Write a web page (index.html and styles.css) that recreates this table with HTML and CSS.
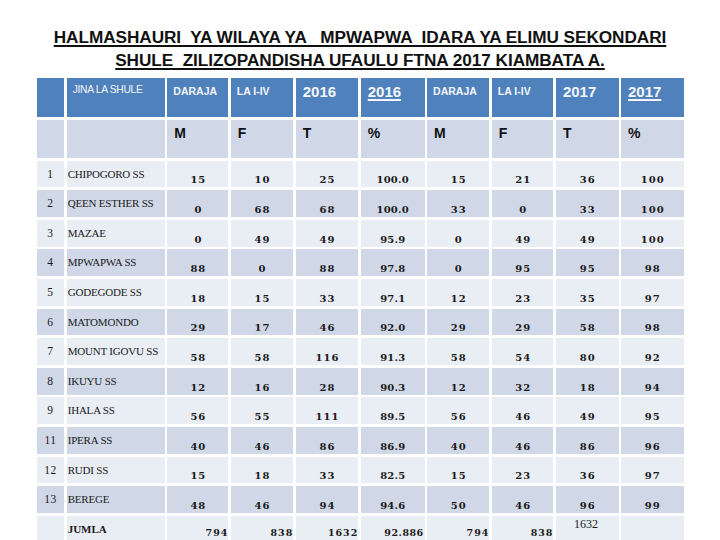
FILE: index.html
```html
<!DOCTYPE html>
<html>
<head>
<meta charset="utf-8">
<link rel="stylesheet" href="styles.css">
</head>
<body>
<div class="page">
  <h1 class="title"><span class="line">HALMASHAURI  YA WILAYA YA   MPWAPWA  IDARA YA ELIMU SEKONDARI</span><span class="line">SHULE  ZILIZOPANDISHA UFAULU FTNA 2017 KIAMBATA A.</span></h1>
  <div class="grid">
    <div class="row head">
      <div></div>
      <div class="small">JINA LA SHULE</div>
      <div class="mid">DARAJA</div>
      <div class="mid">LA I-IV</div>
      <div class="year">2016</div>
      <div class="year u">2016</div>
      <div class="mid">DARAJA</div>
      <div class="mid">LA I-IV</div>
      <div class="year">2017</div>
      <div class="year u">2017</div>
    </div>
    <div class="row sub">
      <div></div><div></div>
      <div>M</div><div>F</div><div>T</div><div>%</div>
      <div>M</div><div>F</div><div>T</div><div>%</div>
    </div>
    <div class="row body light">
      <div class="no">1</div><div class="name">CHIPOGORO SS</div>
      <div class="n">15</div><div class="n">10</div><div class="n">25</div><div class="n d">100.0</div><div class="n">15</div><div class="n">21</div><div class="n">36</div><div class="n">100</div>
    </div>
    <div class="row body dark">
      <div class="no">2</div><div class="name">QEEN ESTHER SS</div>
      <div class="n">0</div><div class="n">68</div><div class="n">68</div><div class="n d">100.0</div><div class="n">33</div><div class="n">0</div><div class="n">33</div><div class="n">100</div>
    </div>
    <div class="row body light">
      <div class="no">3</div><div class="name">MAZAE</div>
      <div class="n">0</div><div class="n">49</div><div class="n">49</div><div class="n d">95.9</div><div class="n">0</div><div class="n">49</div><div class="n">49</div><div class="n">100</div>
    </div>
    <div class="row body dark">
      <div class="no">4</div><div class="name">MPWAPWA SS</div>
      <div class="n">88</div><div class="n">0</div><div class="n">88</div><div class="n d">97.8</div><div class="n">0</div><div class="n">95</div><div class="n">95</div><div class="n">98</div>
    </div>
    <div class="row body light">
      <div class="no">5</div><div class="name">GODEGODE SS</div>
      <div class="n">18</div><div class="n">15</div><div class="n">33</div><div class="n d">97.1</div><div class="n">12</div><div class="n">23</div><div class="n">35</div><div class="n">97</div>
    </div>
    <div class="row body dark">
      <div class="no">6</div><div class="name">MATOMONDO</div>
      <div class="n">29</div><div class="n">17</div><div class="n">46</div><div class="n d">92.0</div><div class="n">29</div><div class="n">29</div><div class="n">58</div><div class="n">98</div>
    </div>
    <div class="row body light">
      <div class="no">7</div><div class="name">MOUNT IGOVU SS</div>
      <div class="n">58</div><div class="n">58</div><div class="n">116</div><div class="n d">91.3</div><div class="n">58</div><div class="n">54</div><div class="n">80</div><div class="n">92</div>
    </div>
    <div class="row body dark">
      <div class="no">8</div><div class="name">IKUYU SS</div>
      <div class="n">12</div><div class="n">16</div><div class="n">28</div><div class="n d">90.3</div><div class="n">12</div><div class="n">32</div><div class="n">18</div><div class="n">94</div>
    </div>
    <div class="row body light">
      <div class="no">9</div><div class="name">IHALA SS</div>
      <div class="n">56</div><div class="n">55</div><div class="n">111</div><div class="n d">89.5</div><div class="n">56</div><div class="n">46</div><div class="n">49</div><div class="n">95</div>
    </div>
    <div class="row body dark">
      <div class="no">11</div><div class="name">IPERA SS</div>
      <div class="n">40</div><div class="n">46</div><div class="n">86</div><div class="n d">86.9</div><div class="n">40</div><div class="n">46</div><div class="n">86</div><div class="n">96</div>
    </div>
    <div class="row body light">
      <div class="no">12</div><div class="name">RUDI SS</div>
      <div class="n">15</div><div class="n">18</div><div class="n">33</div><div class="n d">82.5</div><div class="n">15</div><div class="n">23</div><div class="n">36</div><div class="n">97</div>
    </div>
    <div class="row body dark">
      <div class="no">13</div><div class="name">BEREGE</div>
      <div class="n">48</div><div class="n">46</div><div class="n">94</div><div class="n d">94.6</div><div class="n">50</div><div class="n">46</div><div class="n">96</div><div class="n">99</div>
    </div>
    <div class="row body light total">
      <div></div><div class="name bold">JUMLA</div>
      <div class="t">794</div><div class="t">838</div><div class="t">1632</div><div class="t d">92.886</div><div class="t">794</div><div class="t">838</div><div class="t plain">1632</div><div></div>
    </div>
  </div>
</div>
</body>
</html>
```
FILE: styles.css
```css
html, body {
  margin: 0;
  padding: 0;
  background: #ffffff;
}

.page {
  width: 720px;
  height: 540px;
  overflow: hidden;
}

.title {
  margin: 0;
  padding-top: 26px;
  display: flex;
  flex-direction: column;
  align-items: center;
  font-family: "Liberation Sans", Arial, sans-serif;
  font-weight: bold;
  font-size: 17.2px;
  line-height: 23px;
  letter-spacing: -0.05px;
  color: #111;
}

.title .line {
  white-space: pre;
  text-decoration: underline;
  text-decoration-thickness: 1.5px;
  text-underline-offset: 2px;
}

.grid {
  margin: 6px 0 0 36.7px;
  display: grid;
  grid-template-columns: 27.6px 98.3px 61px 62.6px 62.6px 64px 62.3px 61.7px 62.7px 62.7px;
  grid-template-rows: 39px 38px repeat(13, 26.8px);
  column-gap: 2.4px;
  row-gap: 2.8px;
  width: 647px;
}

.row {
  display: contents;
}

.row > div {
  box-sizing: border-box;
  overflow: hidden;
  white-space: nowrap;
}

/* header row 1 */
.head > div {
  background: #4f81bd;
  color: #f4f6fa;
  font-family: "Liberation Sans", Arial, sans-serif;
  padding: 6px 0 0 6px;
}

.head .small {
  font-size: 10.3px;
  letter-spacing: -0.3px;
  padding-top: 6px;
}

.head .mid {
  font-size: 10.5px;
  font-weight: bold;
  padding-top: 7px;
}

.head .year {
  font-size: 15px;
  font-weight: bold;
  padding: 5px 0 0 7px;
}

.head .u {
  text-decoration: underline;
  text-decoration-thickness: 1.5px;
  text-underline-offset: 2px;
}

/* header row 2 */
.sub > div {
  background: #d0d8e8;
  color: #111;
  font-family: "Liberation Sans", Arial, sans-serif;
  font-weight: bold;
  font-size: 14px;
  padding: 5px 0 0 7px;
}

/* body rows */
.light > div {
  background: #e9edf4;
}

.dark > div {
  background: #d0d8e8;
}

.body > div {
  color: #1a1a1a;
  font-family: "Liberation Serif", "Times New Roman", serif;
}

.body .no {
  font-size: 11.5px;
  text-align: center;
  padding-top: 7px;
  letter-spacing: 0.5px;
}

.body .name {
  font-size: 11px;
  padding: 7px 0 0 1px;
  letter-spacing: -0.2px;
}

.body .name.bold {
  font-weight: bold;
  letter-spacing: 0;
}

.body .n {
  display: flex;
  justify-content: center;
  align-items: flex-end;
  padding: 0 0 1px 1px;
  font-family: "DejaVu Serif", serif;
  font-weight: bold;
  font-size: 10px;
  line-height: 12px;
  letter-spacing: 1px;
}

.body .n.d {
  letter-spacing: 0.2px;
  padding-left: 0;
}

.total .t {
  display: flex;
  justify-content: flex-end;
  align-items: flex-end;
  padding: 0 0 4px 0;
  font-family: "DejaVu Serif", serif;
  font-weight: bold;
  font-size: 9.5px;
  line-height: 12px;
  letter-spacing: 1px;
}

.total .t.d {
  letter-spacing: 0.5px;
  padding-right: 1px;
}

.total .t.plain {
  justify-content: flex-start;
  align-items: flex-start;
  padding: 2px 0 0 18px;
  font-family: "Liberation Serif", serif;
  font-weight: normal;
  font-size: 12px;
  letter-spacing: 0;
}
```
